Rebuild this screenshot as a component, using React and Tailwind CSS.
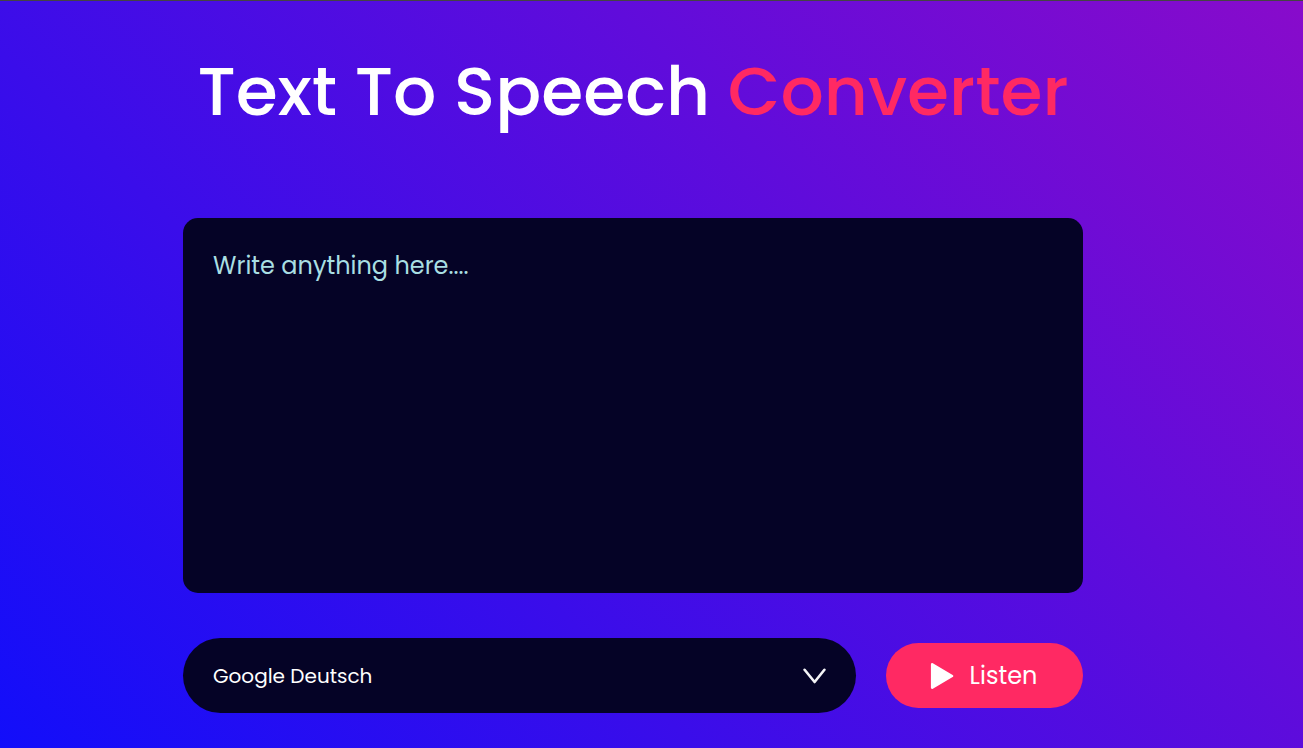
import { useState } from 'react';

const voices = ['Google Deutsch', 'Google US English', 'Google UK English Female', 'Google español', 'Google français'];

function ChevronIcon() {
  return (
    <svg className="pointer-events-none col-start-1 row-start-1 mr-[30px] h-4 w-6 self-center justify-self-end" viewBox="0 0 24 16" fill="none" stroke="#f4f4f6" strokeWidth="2.6" strokeLinecap="round" strokeLinejoin="round" aria-hidden="true">
      <path d="M2.6 1.8 L12.6 14 L22.4 1.8" />
    </svg>
  );
}

function PlayIcon() {
  return (
    <svg className="h-7 w-6 shrink-0" viewBox="0 0 24 28" aria-hidden="true">
      <path d="M2.2 2.4 L22 14 L2.2 25.6 Z" fill="#fff" stroke="#fff" strokeWidth="2.6" strokeLinejoin="round" />
    </svg>
  );
}

export default function App() {
  const [voice, setVoice] = useState(voices[0]);
  const [text, setText] = useState('');

  const speak = () => {
    const message = new SpeechSynthesisUtterance(text);
    message.voice = window.speechSynthesis.getVoices().find((v) => v.name === voice) || null;
    window.speechSynthesis.speak(message);
  };

  return (
    <main className="flex min-h-screen flex-col items-center border-t border-[#444444] bg-linear-45/srgb from-[#120efa] to-[#880bcb] pr-[37px] font-['Poppins','Inter',sans-serif] text-white">
      <h1 className="mt-[41px] whitespace-nowrap text-[68px] leading-[100px] font-medium">
        Text To Speech <span className="text-[#ff2963]">Converter</span>
      </h1>
      <div className="mt-[76px] flex w-full max-w-[900px] flex-col gap-[45px]">
        <textarea
          aria-label="Text to convert"
          placeholder="Write anything here...."
          value={text}
          onChange={(e) => setText(e.target.value)}
          className="block h-[375px] w-full resize-none rounded-[15px] bg-[#050326] p-[30px] text-[24px] leading-9 outline-none placeholder:text-[#a9dfe3]"
        />
        <div className="flex items-center gap-[30px]">
          <div className="grid flex-1">
            <select
              aria-label="Voice"
              value={voice}
              onChange={(e) => setVoice(e.target.value)}
              className="col-start-1 row-start-1 h-[75px] w-full appearance-none rounded-full bg-[#050326] px-[30px] text-[20px] outline-none"
            >
              {voices.map((v) => (
                <option key={v}>{v}</option>
              ))}
            </select>
            <ChevronIcon />
          </div>
          <button type="button" onClick={speak} className="flex h-[65px] w-[197px] items-center justify-center gap-4 rounded-full bg-[#ff2963] pr-0.5 text-[24px]">
            <PlayIcon />
            Listen
          </button>
        </div>
      </div>
    </main>
  );
}
